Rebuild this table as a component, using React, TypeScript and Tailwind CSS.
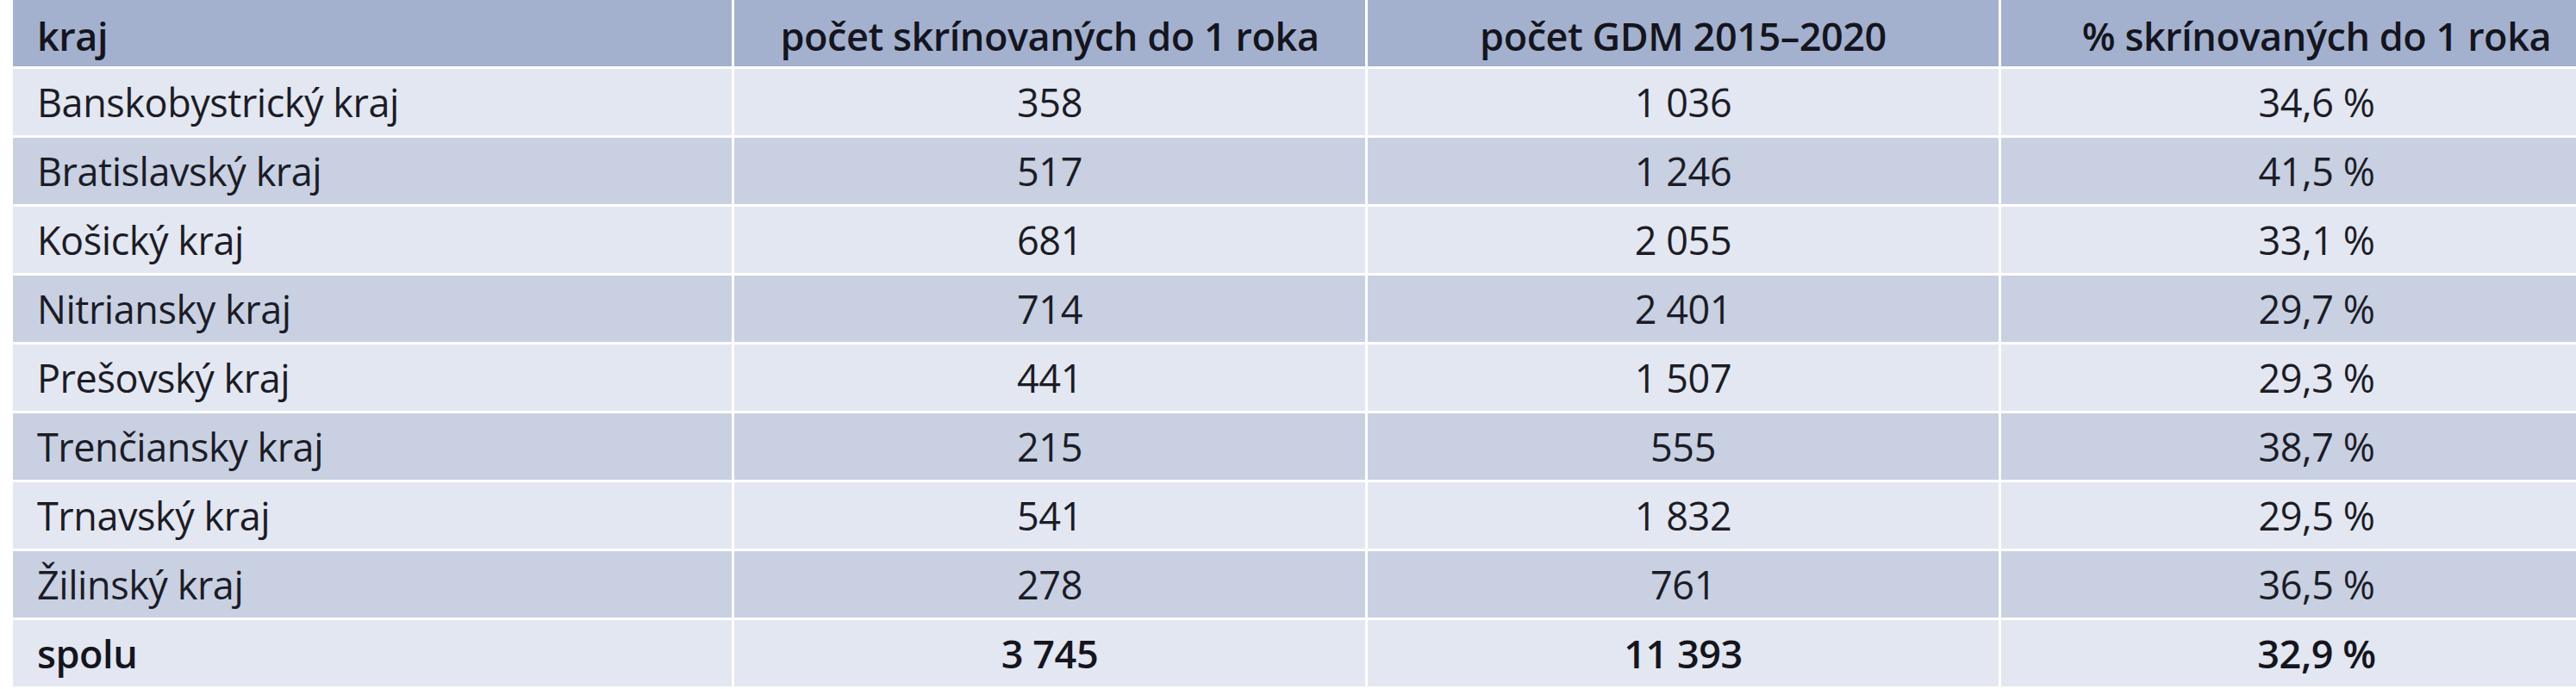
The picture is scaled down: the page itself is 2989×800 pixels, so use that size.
const rows = [
  { kraj: "Banskobystrický kraj", skrin: "358", gdm: "1 036", pct: "34,6 %" },
  { kraj: "Bratislavský kraj", skrin: "517", gdm: "1 246", pct: "41,5 %" },
  { kraj: "Košický kraj", skrin: "681", gdm: "2 055", pct: "33,1 %" },
  { kraj: "Nitriansky kraj", skrin: "714", gdm: "2 401", pct: "29,7 %" },
  { kraj: "Prešovský kraj", skrin: "441", gdm: "1 507", pct: "29,3 %" },
  { kraj: "Trenčiansky kraj", skrin: "215", gdm: "555", pct: "38,7 %" },
  { kraj: "Trnavský kraj", skrin: "541", gdm: "1 832", pct: "29,5 %" },
  { kraj: "Žilinský kraj", skrin: "278", gdm: "761", pct: "36,5 %" },
];

const rowGrid = "grid grid-cols-[834px_732px_732px_732px] gap-x-[3px] h-[77px] shrink-0";
const cell = "flex items-center justify-center";
const firstCell = "flex items-center pl-[28px]";
const headCell = "bg-[#a3b1cf] pt-[6px]";

export default function App() {
  return (
    <div
      className="w-[2989px] h-[800px] overflow-hidden bg-white pl-[15px] text-[45px] tracking-[-0.01em] leading-none text-[#1c1c26]"
      style={{ fontFamily: '"Open Sans", "Noto Sans", sans-serif' }}
    >
      <div className="flex flex-col gap-y-[3px] w-[3039px]">
        {/* header */}
        <div className={`${rowGrid} font-semibold text-[#15151d]`}>
          <div className={`${firstCell} ${headCell}`}>kraj</div>
          <div className={`${cell} ${headCell}`}>počet skrínovaných do 1 roka</div>
          <div className={`${cell} ${headCell}`}>počet GDM 2015–2020</div>
          <div className={`${cell} ${headCell}`}>% skrínovaných do 1 roka</div>
        </div>

        {rows.map((r, i) => {
          const bg = i % 2 === 0 ? "bg-[#e3e7f1]" : "bg-[#c8d0e2]";
          return (
            <div key={r.kraj} className={rowGrid}>
              <div className={`${firstCell} ${bg}`}>{r.kraj}</div>
              <div className={`${cell} ${bg}`}>{r.skrin}</div>
              <div className={`${cell} ${bg}`}>{r.gdm}</div>
              <div className={`${cell} ${bg}`}>{r.pct}</div>
            </div>
          );
        })}

        {/* total */}
        <div className={`${rowGrid} font-semibold text-[#15151d]`}>
          <div className={`${firstCell} bg-[#e3e7f1]`}>spolu</div>
          <div className={`${cell} bg-[#e3e7f1]`}>3 745</div>
          <div className={`${cell} bg-[#e3e7f1]`}>11 393</div>
          <div className={`${cell} bg-[#e3e7f1]`}>32,9 %</div>
        </div>
      </div>
    </div>
  );
}
